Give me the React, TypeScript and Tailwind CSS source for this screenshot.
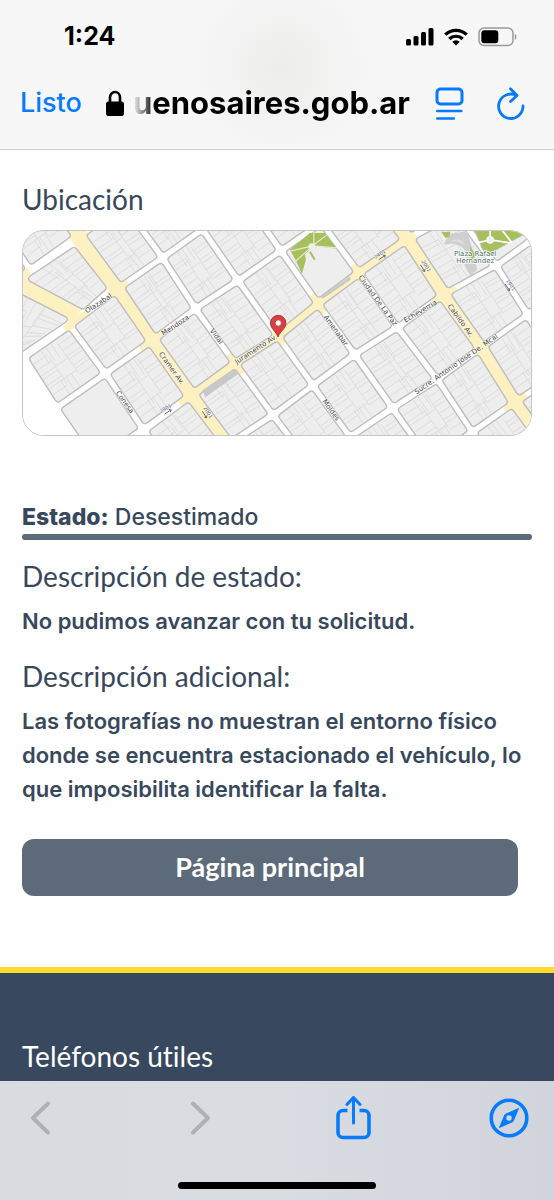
/**
 * Request status page inside an in-app browser:
 *   status bar + address bar  |  page content  |  page footer  |  browser toolbar
 */
import type { ReactNode } from "react";

type Point = [number, number];

const HEADING = "font-['Lato',sans-serif] text-[28px] leading-9 [font-variant-ligatures:none]";
const BODY = "font-['Inter',sans-serif] text-[22px] leading-[34px]";

/* ---------- browser chrome ---------- */

function StatusBar() {
  return (
    <div className="flex h-[74px] items-center justify-between pr-[37px] pl-16">
      <time className="text-[25px] font-bold text-black">1:24</time>
      <div className="flex items-center gap-[10px]">
        <svg width="29" height="18" viewBox="0 0 29 18" aria-hidden="true">
          <rect x="1" y="11" width="5" height="6.5" rx="1.5" />
          <rect x="8.500" y="8" width="5" height="9.500" rx="1.5" />
          <rect x="16" y="4" width="5" height="13.500" rx="1.5" />
          <rect x="23.500" y="0" width="5" height="17.500" rx="1.5" />
        </svg>
        <svg width="24" height="18" viewBox="0 0 24 18" aria-hidden="true">
          <g fill="none" stroke="#000" strokeWidth="3.200">
            <path d="M1.300 6.700a15.200 15.200 0 0 1 21.400 0" />
            <path d="M5.300 11a9.500 9.500 0 0 1 13.400 0" />
          </g>
          <path d="M12 17.500 8.300 13.800a5.300 5.300 0 0 1 7.400 0Z" />
        </svg>
        <svg width="39" height="20" viewBox="0 0 39 20" aria-hidden="true">
          <rect x="1" y="1" width="34" height="17.500" rx="5" fill="none" stroke="#9b9b9b" strokeWidth="1.500" />
          <rect x="3.300" y="3.300" width="17" height="13" rx="3" />
          <path d="M36.800 6.800c2.200 1 2.200 5 0 6Z" fill="#9b9b9b" />
        </svg>
      </div>
    </div>
  );
}

function AddressBar() {
  return (
    <div className="flex h-[75px] items-center pr-[29px] pb-4 pl-5">
      <button type="button" className="text-[27px] font-medium text-[#067bfd]">
        Listo
      </button>
      <div className="flex min-w-0 flex-1 items-center justify-end gap-2 pr-[25px]">
        <svg width="20" height="27" viewBox="0 0 20 27" aria-label="Conexión segura" className="shrink-0">
          <path d="M5 12V7.500a5 5.500 0 0 1 10 0V12" fill="none" stroke="#000" strokeWidth="2.600" />
          <rect x="1" y="11.500" width="18" height="14.500" rx="2.800" />
        </svg>
        <span className="text-[31px] font-bold whitespace-nowrap text-black [mask-image:linear-gradient(to_right,transparent,black_22px)]">
          uenosaires.gob.ar
        </span>
      </div>
      <div className="flex items-center gap-8 text-[#067bfd]">
        <button type="button" aria-label="Opciones de página">
          <svg width="30" height="34" viewBox="0 0 30 34" fill="none" stroke="currentColor" strokeWidth="3" strokeLinecap="round">
            <rect x="2" y="2" width="25" height="15" rx="3.500" />
            <path d="M2.300 24h24M2.300 31.500h16.500" strokeWidth="2.600" />
          </svg>
        </button>
        <button type="button" aria-label="Recargar">
          <svg width="28" height="34" viewBox="0 0 28 34" fill="none" stroke="currentColor" strokeWidth="2.800" strokeLinecap="round" strokeLinejoin="round">
            <path d="M26 19A12.200 12.200 0 1 1 19.500 8.500" />
            <path d="M13.500 1.700 20 8.500l-6.500 6" />
          </svg>
        </button>
      </div>
    </div>
  );
}

function ToolbarButton({ label, disabled, children }: { label: string; disabled?: boolean; children: ReactNode }) {
  return (
    <button type="button" aria-label={label} disabled={disabled} className="flex h-12 w-10 items-center justify-center text-[#067bfd] disabled:text-[#adb0b5]">
      {children}
    </button>
  );
}

function BrowserToolbar() {
  return (
    <div className="flex flex-1 flex-col items-center bg-linear-to-r from-[#d8dbe0] via-[#d9dce1] to-[#d1d4dc]">
      <nav className="flex w-full items-center justify-between px-[25px] pt-[13px]">
        <ToolbarButton label="Atrás" disabled>
          <svg width="40" height="36" viewBox="0 0 40 36" fill="none" stroke="currentColor" strokeWidth="4" strokeLinecap="round" strokeLinejoin="round">
            <path d="M23 3.500 8 18l15 14.500" />
          </svg>
        </ToolbarButton>
        <ToolbarButton label="Adelante" disabled>
          <svg width="40" height="36" viewBox="0 0 40 36" fill="none" stroke="currentColor" strokeWidth="4" strokeLinecap="round" strokeLinejoin="round">
            <path d="M13 3.500 28 18 13 32.500" />
          </svg>
        </ToolbarButton>
        <ToolbarButton label="Compartir">
          <svg width="36" height="45" viewBox="0 0 36 45" fill="none" stroke="currentColor" strokeWidth="3.600" strokeLinecap="round" strokeLinejoin="round">
            <path d="M11.500 14.500H7a5 5 0 0 0-5 5v17a5 5 0 0 0 5 5h21a5 5 0 0 0 5-5v-17a5 5 0 0 0-5-5h-4.500" strokeLinecap="butt" />
            <path d="M17.500 2v25" strokeWidth="3" />
            <path d="m11 8.500 6.500-7 6.500 7" strokeWidth="3" />
          </svg>
        </ToolbarButton>
        <ToolbarButton label="Abrir en Safari">
          <svg width="40" height="40" viewBox="0 0 40 40" className="shrink-0">
            <circle cx="20" cy="20" r="17.800" fill="none" stroke="currentColor" strokeWidth="3.600" />
            <path d="M29.500 10.500 24 23.500 10.500 29.500 16 16.500Z" fill="currentColor" stroke="currentColor" strokeLinejoin="round" />
            <circle cx="20" cy="20" r="2.700" fill="#d3d6dd" />
          </svg>
        </ToolbarButton>
      </nav>
      <div className="mt-auto mb-[11px] h-[7px] w-[198px] rounded-full bg-black" />
    </div>
  );
}

/* ---------- map ---------- */

// Street crossings, one row per street that runs up to the right.
// Columns: (unnamed), Conesa, Cramer, Vidal, Moldes, Amenabar, Ciudad de la Paz, Cabildo, (unnamed), (unnamed)
const CROSSINGS: Point[][] = [
  [[-77, 21], [-29, -14], [16, -52], [65, -76], [100, -100], [145, -130], [185, -160], [235, -190], [275, -220], [315, -250]],
  [[-40, 73], [7, 39], [56, 5], [102, -25], [143, -50], [186, -80], [225, -110], [272, -142], [312, -170], [355, -200]],
  [[1, 127], [47, 95], [95, 58], [140, 27], [180, -2], [222, -32], [262, -60], [310, -92], [352, -122], [395, -150]],
  [[33, 178], [83, 143], [130, 110], [173, 78], [216, 50], [259, 20], [300, -8], [348, -42], [392, -72], [434, -102]],
  [[71, 232], [121, 200], [169, 165], [213, 133], [256, 106], [296, 73], [337, 42], [386, 8], [435, -18], [472, -44]],
  [[110, 284], [160, 250], [206, 214], [251, 185], [291, 155], [333, 124], [376, 97], [422, 64], [475, 35], [511, 9]],
  [[148, 338], [198, 302], [244, 266], [290, 236], [328, 207], [371, 178], [416, 149], [460, 117], [506, 84], [547, 58]],
  [[185, 390], [235, 354], [282, 318], [328, 288], [366, 258], [408, 230], [451, 202], [494, 172], [541, 141], [582, 112]],
  [[222, 442], [272, 406], [320, 370], [366, 340], [404, 310], [446, 282], [490, 254], [532, 224], [578, 194], [620, 164]],
];

const COL_HALF = [2.6, 2.6, 5.6, 2.6, 2.6, 2.6, 2.6, 5.6, 2.6, 2.6];
const ROW_HALF = [2.6, 2.6, 2.6, 2.6, 3.2, 2.6, 2.6, 2.6, 2.6];
const CORNER = 4;

// Blocks drawn without lots, as "row-col".
const OPEN_BLOCKS = ["3-0", "3-5", "4-8"];

// The diagonal avenue cuts these two, so they have their own outlines.
const CUT_BLOCKS = ["1-0", "1-1"];
const CUT_OUTLINES: Point[][] = [
  [[9, 48], [51, 20], [80, 57], [60, 75]],
  [[-20, 58], [41, 89], [-2, 118], [-40, 144]],
];

function mix(a: Point, b: Point, t: number): Point {
  return [a[0] + (b[0] - a[0]) * t, a[1] + (b[1] - a[1]) * t];
}

function at(quad: Point[], u: number, v: number): Point {
  return mix(mix(quad[0], quad[1], u), mix(quad[3], quad[2], u), v);
}

function dist(a: Point, b: Point) {
  return Math.hypot(a[0] - b[0], a[1] - b[1]);
}

function toPath(points: Point[]) {
  return points.map((p, i) => `${i ? "L" : "M"}${p[0].toFixed(1)} ${p[1].toFixed(1)}`).join("");
}

function lots(quad: Point[], seed: number) {
  const left = 0.34 + (seed % 3) * 0.06;
  const right = 0.6 + (seed % 4) * 0.04;
  let d = toPath([at(quad, left, 0.15), at(quad, left, 0.85)]) + toPath([at(quad, right, 0), at(quad, right, 0.8)]);
  for (let i = 1; i < 8; i++) {
    const t = i / 8 + (((i * 7 + seed * 3) % 5) - 2) * 0.014;
    d += toPath([at(quad, -0.05, t), at(quad, i % 3 ? left : right, t)]);
    d += toPath([at(quad, 1.05, t - 0.04), at(quad, right, t - 0.04)]);
  }
  for (let i = 0; i < 3; i++) {
    const t = left - 0.08 + i * 0.14;
    d += toPath([at(quad, t, -0.05), at(quad, t, 0.3)]);
    d += toPath([at(quad, t, 1.05), at(quad, t, 0.72)]);
  }
  return d;
}

function BlockShape({ quad, seed, open }: { quad: Point[]; seed: number; open?: boolean }) {
  const d = toPath(quad) + "Z";
  return (
    <g strokeLinejoin="round">
      <path d={d} fill="#bdbdbd" stroke="#bdbdbd" strokeWidth="8" />
      <path d={d} fill="#eeeeee" stroke="#eeeeee" strokeWidth="5.200" />
      {!open && <path d={lots(quad, seed)} fill="none" stroke="#d8d8d8" strokeWidth="0.800" />}
    </g>
  );
}

function Block({ row, col }: { row: number; col: number }) {
  const outer = [CROSSINGS[row][col], CROSSINGS[row][col + 1], CROSSINGS[row + 1][col + 1], CROSSINGS[row + 1][col]];
  const w = dist(outer[0], outer[1]);
  const h = dist(outer[0], outer[3]);
  const u0 = (COL_HALF[col] + CORNER) / w;
  const u1 = 1 - (COL_HALF[col + 1] + CORNER) / w;
  const v0 = (ROW_HALF[row] + CORNER) / h;
  const v1 = 1 - (ROW_HALF[row + 1] + CORNER) / h;
  const quad = [at(outer, u0, v0), at(outer, u1, v0), at(outer, u1, v1), at(outer, u0, v1)];
  return <BlockShape quad={quad} seed={row * 3 + col} open={OPEN_BLOCKS.includes(`${row}-${col}`)} />;
}

const STREET_LABELS = [
  { text: "Olazabal", x: 76, y: 73, angle: -33 },
  { text: "Mendoza", x: 153, y: 95, angle: -33 },
  { text: "Cramer Av.", x: 149, y: 138, angle: 54 },
  { text: "Conesa", x: 102, y: 172, angle: 54 },
  { text: "Vidal", x: 194, y: 106, angle: 54 },
  { text: "Juramento Av.", x: 234, y: 119, angle: -33 },
  { text: "Amenabar", x: 314, y: 100, angle: 54 },
  { text: "Moldes", x: 309, y: 180, angle: 54 },
  { text: "Ciudad De La Paz", x: 356, y: 70, angle: 54 },
  { text: "Echeverria", x: 399, y: 81, angle: -31 },
  { text: "Cabildo Av.", x: 439, y: 90, angle: 54 },
  { text: "Sucre, Antonio Jose De, Mcal", x: 435, y: 134, angle: -35 },
];

const NUMBER_LABELS = [
  { text: "2901", x: 143, y: 178, angle: -33 },
  { text: "2001", x: 186, y: 182, angle: 58 },
  { text: "2401", x: 358, y: 23, angle: -33 },
  { text: "2001", x: 405, y: 35, angle: 58 },
  { text: "1901", x: 490, y: 54, angle: 54 },
];

function LocationMap() {
  const blocks = CROSSINGS.slice(1).flatMap((_, row) =>
    CROSSINGS[row]
      .slice(1)
      .map((_, col) => (CUT_BLOCKS.includes(`${row}-${col}`) ? null : <Block key={`${row}-${col}`} row={row} col={col} />)),
  );
  return (
    <div className="h-[206px] overflow-hidden rounded-[22px] border border-[#c6c6c6] bg-white">
      <svg viewBox="0 0 510 205" preserveAspectRatio="xMidYMid slice" className="h-full w-full" role="img" aria-label="Mapa de la ubicación">
        <rect width="510" height="205" fill="#fff" />
        <g fill="none" stroke="#fdf0c1">
          <path d={toPath(CROSSINGS.map((r) => r[2]))} strokeWidth="18" />
          <path d={toPath(CROSSINGS.map((r) => r[7]))} strokeWidth="18" />
          <path d={toPath(CROSSINGS[4].slice(2, 8))} strokeWidth="13" />
          <path d="M-10 51 56 84" strokeWidth="20" />
          <path d="M42 99 66 82M-6 48 6 40M86 65 105 51M118 118 142 102M157 173 168 165M410 72 434 56M483 179 505 164M206 124 220 143M290 64 302 82M331 34 343 51M252 100 262 114" strokeWidth="8" />
        </g>
        {blocks}
        {CUT_OUTLINES.map((quad, i) => (
          <BlockShape key={i} quad={quad} seed={i + 1} />
        ))}

        {/* bus lanes beside Juramento */}
        <path d="M180 160 211 139 217 143 183 167Z" fill="#c8c8c8" />
        <path d="m299 66 29-20 1 3-28 19Z" fill="#c8c8c8" />

        {/* squares */}
        <path d="m268 19 20-17h15l12 16-24-3-5 6-3 2 1 6-4 14-6-13Z" fill="#a8bf5e" />
        <path d="m269 20 22-5 24 2M292 1v13l13-10M291 15l-18 16" fill="none" stroke="#e4ebcd" strokeWidth="1.200" />
        <path d="m288 21 5 8" stroke="#a8bf5e" strokeWidth="2" />
        <circle cx="290" cy="16" r="3.500" fill="#eee" />
        <path d="M423 14q3-13 13-12l9-2 5 14 6 25-7 6-6-11q5-8 1-14-7-10-21-6Z" fill="#cfcfcf" />
        <path d="M428 11q12-7 16 4-8-6-16-4Z" fill="#dfdfdf" />
        <path d="m420 1 9 0-1 5-4 1Z" fill="#a8bf5e" />
        <path d="m449 16 6 9-5 4Z" fill="#a8bf5e" />
        <path d="m453-2 50 0-1 6-36 20-5-6Z" fill="#a8bf5e" stroke="#bdbdbd" strokeWidth="0.800" />
        <path d="m456 12 13-3 20 3M469 9V-2M480-2l11 14" fill="none" stroke="#fff" strokeWidth="1.800" />
        <circle cx="469" cy="9" r="3.500" fill="#eee" stroke="#fff" />

        <g fontFamily="'DejaVu Sans', sans-serif" fontSize="7" textAnchor="middle" dominantBaseline="central" paintOrder="stroke" strokeLinejoin="round">
          <g fill="#444" stroke="#fff" strokeOpacity="0.7" strokeWidth="1.500">
            {STREET_LABELS.map((l) => (
              <text key={l.text} transform={`translate(${l.x} ${l.y}) rotate(${l.angle})`}>
                {l.text}
              </text>
            ))}
          </g>
          <g fill="#55558c" stroke="#fff" strokeOpacity="0.7" strokeWidth="1">
            {NUMBER_LABELS.map((l) => (
              <g key={`${l.text}-${l.x}`} transform={`translate(${l.x} ${l.y}) rotate(${l.angle})`}>
                <text fontSize="5">{l.text}</text>
                <path d="M-4 4.500h7M2 3l2 1.500-2 1.500" fill="none" stroke="#555" strokeWidth="0.800" strokeOpacity="1" />
              </g>
            ))}
          </g>
          <g fill="#4b7058" stroke="#fff" strokeWidth="1.500">
            <text x="454" y="23">Plaza Rafael</text>
            <text x="454" y="30">Hernandez</text>
          </g>
        </g>

        {/* pin */}
        <path d="M256 106.500c-2-6-7.500-8-7.500-14a7.700 7.700 0 0 1 15.400 0c0 6-6 8-7.900 14Z" fill="#dc3f40" stroke="#b52f33" />
        <circle cx="256.200" cy="92.500" r="3.200" fill="#fff" stroke="#b52f33" strokeWidth="0.800" />
      </svg>
    </div>
  );
}

/* ---------- page ---------- */

export default function App() {
  return (
    <div className="flex min-h-screen flex-col bg-white font-['Inter',sans-serif] text-[#38485c]">
      <header className="border-b border-[#d0d0d0] bg-[#f7f7f7] bg-[radial-gradient(circle_at_51%_45%,#ededec,#f7f7f7_95px)]">
        <StatusBar />
        <AddressBar />
      </header>

      <main className="px-[22px] pt-[31px] pb-[71px]">
        <section>
          <h2 className={`${HEADING} mb-[13px]`}>Ubicación</h2>
          <LocationMap />
        </section>

        <section className="mt-16">
          <p className="text-[23px] leading-[34px] font-medium">
            <strong className="font-extrabold">Estado:</strong> Desestimado
          </p>
          <div className="h-[6px] rounded-full bg-[#5d6a7a]" />
          <h2 className={`${HEADING} mt-[18px]`}>Descripción de estado:</h2>
          <p className={`${BODY} mt-[10px] font-semibold`}>No pudimos avanzar con tu solicitud.</p>
          <h2 className={`${HEADING} mt-5`}>Descripción adicional:</h2>
          <p className={`${BODY} mt-[10px] font-semibold`}>
            Las fotografías no muestran el entorno físico donde se encuentra estacionado el vehículo, lo que
            imposibilita identificar la falta.
          </p>
        </section>

        <button type="button" className="mt-[33px] flex h-[57px] w-[calc(100%-14px)] items-center justify-center rounded-xl bg-[#5d6a7a] font-['Lato',sans-serif] text-[27px] font-bold text-white">
          Página principal
        </button>
      </main>

      <footer className="border-t-[6px] border-[#ffdb2c] bg-[#38485e] px-[22px] pt-[65px] pb-[7px] text-white">
        <h2 className={HEADING}>Teléfonos útiles</h2>
      </footer>

      <BrowserToolbar />
    </div>
  );
}
